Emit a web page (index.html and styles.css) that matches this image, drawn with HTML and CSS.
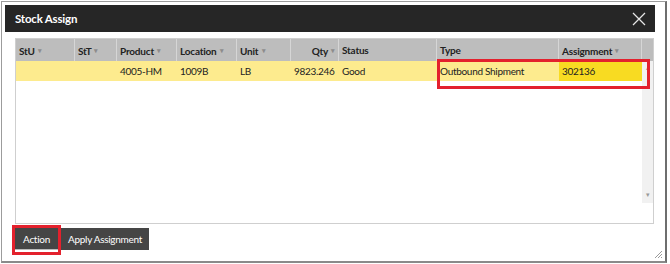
FILE: index.html
```html
<!DOCTYPE html>
<html lang="en">
  <head>
    <meta charset="UTF-8" />
    <title>Stock Assign</title>
    <link rel="stylesheet" href="styles.css">
  </head>
  <body>
    <div class="dialog">
      <div class="inner">
        <div class="titlebar">
          <span class="title">Stock Assign</span>
          <svg class="close" width="14" height="14" viewBox="0 0 14 14">
            <path d="M1 1 L13 13 M13 1 L1 13" stroke="#e6e6e6" stroke-width="1.3" fill="none"/>
          </svg>
        </div>

        <div class="grid">
          <div class="row head">
            <div class="cell">StU <i>&#9662;</i></div>
            <div class="cell">StT <i>&#9662;</i></div>
            <div class="cell">Product <i>&#9662;</i></div>
            <div class="cell">Location <i>&#9662;</i></div>
            <div class="cell">Unit <i>&#9662;</i></div>
            <div class="cell num">Qty <i>&#9662;</i></div>
            <div class="cell">Status</div>
            <div class="cell">Type</div>
            <div class="cell">Assignment <i>&#9662;</i></div>
            <div class="cell gutter"></div>
          </div>
          <div class="body">
            <div class="rows">
              <div class="row data">
                <div class="cell"></div>
                <div class="cell"></div>
                <div class="cell">4005-HM</div>
                <div class="cell">1009B</div>
                <div class="cell">LB</div>
                <div class="cell num">9823.246</div>
                <div class="cell">Good</div>
                <div class="cell">Outbound Shipment</div>
                <div class="cell assign">302136</div>
              </div>
            </div>
            <div class="scroll">
              <span class="up">&#9652;</span>
              <span class="down">&#9662;</span>
            </div>
          </div>
          <!-- annotation boxes -->
          <div class="mark mark-row"></div>
        </div>

        <div class="actions">
          <button class="btn btn-action">Action</button>
          <button class="btn btn-apply">Apply Assignment</button>
          <div class="mark mark-btn"></div>
        </div>
      </div>
      <svg class="grip" width="9" height="9" viewBox="0 0 9 9">
        <path d="M8 1 L1 8 M8 4 L4 8 M8 7 L7 8" stroke="#9a9a9a" stroke-width="1" fill="none"/>
      </svg>
    </div>
  </body>
</html>
```

FILE: styles.css
```css
body {
  margin: 0;
  background: #fff;
  font-family: Lato, "Open Sans", sans-serif;
}
.dialog {
  position: relative;
  width: 663px;
  height: 259px;
  margin: 1px 0 0 1px;
  border: 1px solid #9c9c9c;
  border-right: 2px solid #6e6e6e;
  border-bottom: 2px solid #8a8a8a;
  box-sizing: content-box;
}
.inner {
  width: 650px;
  padding: 3px 0 0 3px;
}
.titlebar {
  height: 27px;
  background: #262626;
  display: flex;
  align-items: center;
  justify-content: space-between;
  padding: 0 9px 0 10px;
}
.title {
  color: #fff;
  font-size: 11.5px;
  font-weight: 700;
  letter-spacing: -0.2px;
}
.close {
  display: block;
}
.grid {
  position: relative;
  width: 637px;
  height: 184px;
  margin: 6px 0 0 10px;
  border: 1px solid #cfcfcf;
  display: flex;
  flex-direction: column;
}
.row {
  display: grid;
  grid-template-columns: 59px 42px 60px 60px 54px 48px 98px 122px 83px 11px;
}
.head {
  height: 22px;
  background: #bdbdbd;
  font-size: 10px;
  font-weight: 700;
  letter-spacing: -0.2px;
  color: #222;
}
.head .cell {
  border-right: 1px solid #d6d6d6;
  line-height: 22px;
}
.head .cell:last-child {
  border-right: 0;
}
.cell {
  padding: 0 3px;
  white-space: nowrap;
  overflow: hidden;
}
.cell i {
  font-style: normal;
  font-size: 7px;
  color: #8c8c8c;
  vertical-align: 2px;
  margin-left: 1px;
}
.num {
  text-align: right;
}
.body {
  flex: 1;
  display: flex;
}
.rows {
  width: 626px;
}
.data {
  height: 20px;
  background: #fdeb8e;
  font-size: 10px;
  letter-spacing: -0.3px;
  color: #222;
  line-height: 20px;
  grid-template-columns: 59px 42px 60px 60px 54px 48px 98px 122px 83px;
}
.data .num {
  padding-right: 9px;
}
.data .assign {
  background: #f8db22;
}
.scroll {
  width: 11px;
  height: 142px;
  background: #f1f1f1;
  display: flex;
  flex-direction: column;
  justify-content: space-between;
  align-items: center;
  font-size: 7px;
  color: #9a9a9a;
  padding: 2px 0 4px;
  box-sizing: border-box;
}
.mark {
  position: absolute;
  border: 3px solid #e3212d;
  box-sizing: border-box;
}
.mark-row {
  left: 421px;
  top: 20px;
  width: 213px;
  height: 30px;
}
.actions {
  position: relative;
  display: flex;
  gap: 3px;
  margin: 4px 0 0 10px;
}
.btn {
  height: 22px;
  border: 0;
  background: #454545;
  color: #fff;
  font-family: Lato, "Open Sans", sans-serif;
  font-size: 10px;
  letter-spacing: -0.3px;
  padding: 0;
}
.btn-action {
  width: 43px;
  border-bottom: 1px solid #bbb;
}
.btn-apply {
  width: 88px;
}
.mark-btn {
  left: -3px;
  top: -3px;
  width: 49px;
  height: 30px;
}
.grip {
  position: absolute;
  right: 2px;
  bottom: 2px;
}
```
